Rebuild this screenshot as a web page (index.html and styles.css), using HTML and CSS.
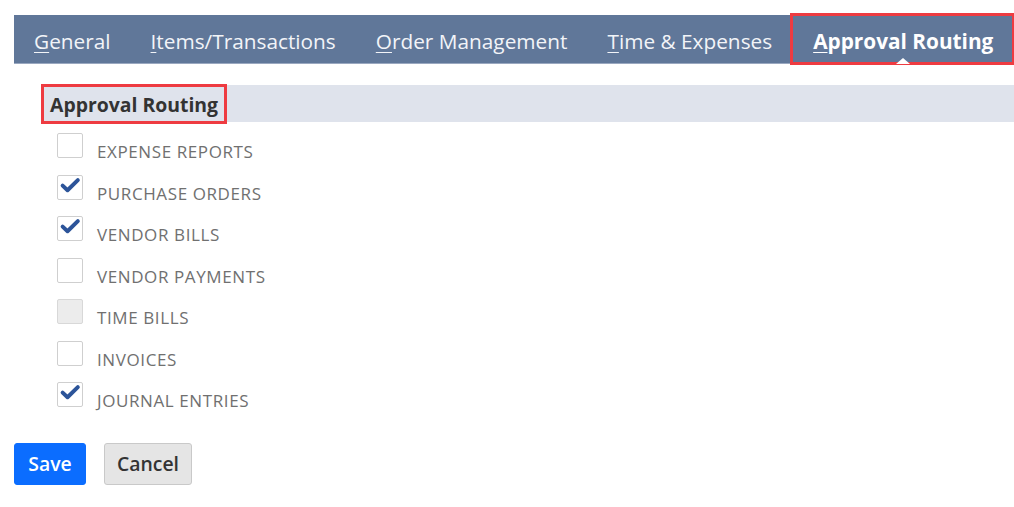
FILE: index.html
```html
<!DOCTYPE html>
<html>
<head>
<meta charset="utf-8">
<link rel="stylesheet" href="styles.css">
</head>
<body>
<nav class="tabs">
  <a class="tab"><u>G</u>eneral</a>
  <a class="tab"><u>I</u>tems/Transactions</a>
  <a class="tab"><u>O</u>rder Management</a>
  <a class="tab"><u>T</u>ime &amp; Expenses</a>
  <a class="tab active"><u>A</u>pproval Routing</a>
</nav>
<div class="section">
  <span class="section-title">Approval Routing</span>
</div>
<ul class="checks">
  <li class="row"><span class="box"></span><span class="label">Expense Reports</span></li>
  <li class="row"><span class="box"><svg viewBox="0 0 25 25" class="tick"><path d="M4.5 10.5 L9.8 15.5 L21 4.5" /></svg></span><span class="label">Purchase Orders</span></li>
  <li class="row"><span class="box"><svg viewBox="0 0 25 25" class="tick"><path d="M4.5 10.5 L9.8 15.5 L21 4.5" /></svg></span><span class="label">Vendor Bills</span></li>
  <li class="row"><span class="box"></span><span class="label">Vendor Payments</span></li>
  <li class="row"><span class="box disabled"></span><span class="label">Time Bills</span></li>
  <li class="row"><span class="box"></span><span class="label">Invoices</span></li>
  <li class="row"><span class="box"><svg viewBox="0 0 25 25" class="tick"><path d="M4.5 10.5 L9.8 15.5 L21 4.5" /></svg></span><span class="label">Journal Entries</span></li>
</ul>
<div class="actions">
  <button class="btn primary">Save</button>
  <button class="btn secondary">Cancel</button>
</div>
</body>
</html>
```
FILE: styles.css
```css
* { box-sizing: border-box; }
body {
  margin: 0;
  font-family: "Open Sans", "Noto Sans", sans-serif;
  background: #fff;
}
.tabs {
  display: flex;
  margin: 15px 0 0 14px;
  height: 49px;
  background: #607799;
  border-bottom: 1px solid #9aa8c0;
}
.tab {
  position: relative;
  padding: 0 20px;
  line-height: 52px;
  height: 48px;
  font-size: 20.8px;
  color: #f2f4f8;
  white-space: nowrap;
}
.tab u { text-decoration-thickness: 1px; text-underline-offset: 3px; }
.tab.active {
  font-weight: 700;
  color: #fff;
  padding: 0 20px 0 21px;
  outline: 3px solid #ee3b41;
  outline-offset: -1px;
}
.tab.active::after {
  content: "";
  position: absolute;
  left: 50%;
  bottom: -1px;
  margin-left: -7px;
  border-left: 7px solid transparent;
  border-right: 7px solid transparent;
  border-bottom: 6px solid #fff;
}
.section {
  margin: 21px 0 0 42px;
  height: 37px;
  background: #dfe3ec;
  display: flex;
  align-items: center;
}
.section-title {
  margin-left: 2px;
  padding: 0 6px;
  height: 34px;
  line-height: 36px;
  font-size: 19.4px;
  font-weight: 700;
  color: #333;
  outline: 3px solid #ee3b41;
}
.checks {
  list-style: none;
  margin: 11px 0 0 57px;
  padding: 0;
}
.row {
  display: flex;
  align-items: flex-start;
  height: 41.5px;
}
.box {
  width: 26px;
  height: 25px;
  border: 1px solid #cfcfcf;
  border-radius: 2px;
  background: #fff;
  flex: none;
}
.box.disabled {
  background: #ececec;
  border-color: #d8d8d8;
}
.tick {
  display: block;
  width: 24px;
  height: 23px;
}
.tick path {
  fill: none;
  stroke: #2c5499;
  stroke-width: 4.3;
  stroke-linecap: round;
  stroke-linejoin: round;
}
.label {
  margin-left: 14px;
  margin-top: 8px;
  font-size: 17px;
  letter-spacing: 0.6px;
  line-height: 22px;
  text-transform: uppercase;
  color: #707070;
}
.actions {
  display: flex;
  gap: 18px;
  margin: 19px 0 0 14px;
}
.btn {
  height: 42px;
  font-family: "Open Sans", "Noto Sans", sans-serif;
  font-size: 19.4px;
  font-weight: 600;
  border-radius: 3px;
  padding: 0;
  cursor: pointer;
}
.btn.primary {
  width: 72px;
  background: #0b6dff;
  border: 1px solid #0b6dff;
  color: #fff;
}
.btn.secondary {
  width: 88px;
  background: #e5e5e5;
  border: 1px solid #c9c9c9;
  color: #333;
}
```
